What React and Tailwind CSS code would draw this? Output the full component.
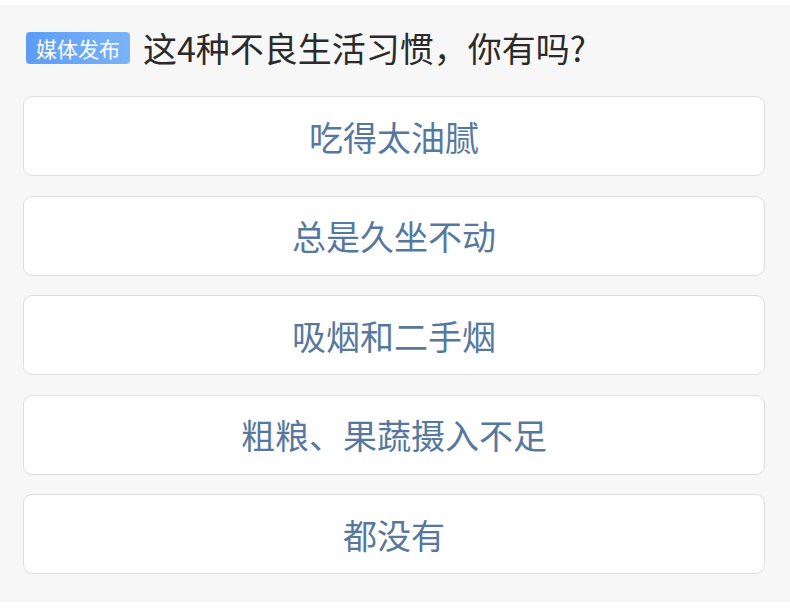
export default function App() {
  const options = ["吃得太油腻", "总是久坐不动", "吸烟和二手烟", "粗粮、果蔬摄入不足", "都没有"];
  const font = { fontFamily: '"Noto Sans CJK SC", "Noto Sans", sans-serif' };
  return (
    <div className="w-[790px] h-[614px] bg-white pt-[5px]" style={font}>
      <div className="h-[597px] bg-[#f7f7f7] pl-[23px] pr-[25px] pt-[26px]">
        <div className="flex items-center h-[34px]">
          <span className="ml-[3px] h-[32px] w-[104px] rounded-[4px] bg-gradient-to-r from-[#5c9cf5] to-[#7ab4f8] text-white text-[21px] leading-[32px] text-center">
            媒体发布
          </span>
          <span className="ml-[13px] text-[34px] leading-[34px] text-[#2a2a2a]">
            这4种不良生活习惯，你有吗?
          </span>
        </div>
        <div className="mt-[31px] flex flex-col gap-[19.5px]">
          {options.map((o) => (
            <div
              key={o}
              className="h-[80px] rounded-[9px] border border-[#dedede] bg-white flex items-center justify-center text-[34px] text-[#56789f]"
            >
              {o}
            </div>
          ))}
        </div>
      </div>
    </div>
  );
}
